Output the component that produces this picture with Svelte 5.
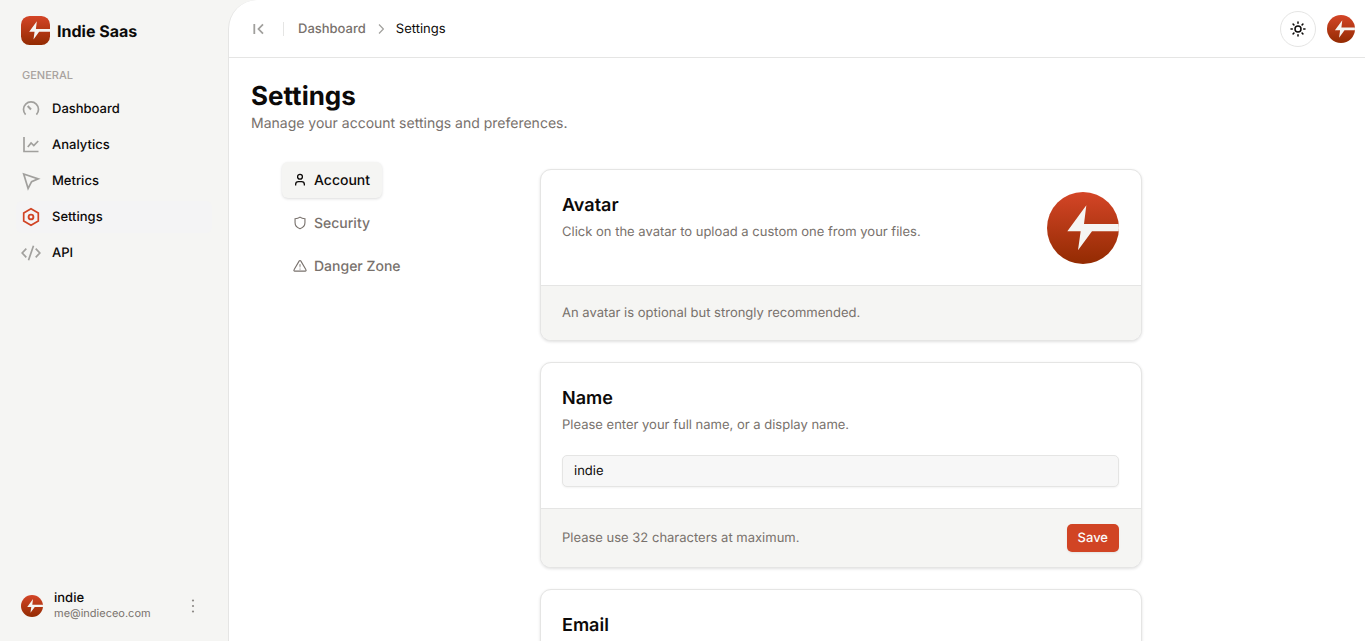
<script>
  let name = $state('indie');
  let email = $state('me@indieceo.com');

  const links = ['Dashboard', 'Analytics', 'Metrics', 'Settings', 'API'];
  const tabs = ['Account', 'Security', 'Danger Zone'];
</script>

{#snippet logo(id, square)}
  <svg class="logo" viewBox="0 0 216 216" aria-hidden="true">
    <defs>
      <linearGradient {id} x1="0" y1="0" x2="0" y2="1">
        <stop offset="0" stop-color="#d44527" />
        <stop offset="1" stop-color="#932b02" />
      </linearGradient>
      <clipPath id="{id}-clip"><rect width="216" height="216" rx={square ? 64 : 108} /></clipPath>
    </defs>
    <g clip-path="url(#{id}-clip)">
      <rect width="216" height="216" fill="url(#{id})" />
      <path d="M118 40 L111 96 H216 V118 H135 L93 175 L101 118 H61 Z" fill="#f5f5f3" />
    </g>
  </svg>
{/snippet}

{#snippet navIcon(label)}
  <svg class="nav-icon" viewBox="0 0 20 20" fill="none" stroke="currentColor" stroke-width="1.7" aria-hidden="true">
    {#if label === 'Dashboard'}
      <path d="M4.600 15.600A7.500 7.500 0 1 1 15.400 15.600" />
      <path d="M6.700 7l3.300 3.500" stroke-width="2" />
    {:else if label === 'Analytics'}
      <path d="M3 2v14.500h14.500M6.800 12l3.300-4 2.700 2.500L17.200 6" />
    {:else if label === 'Metrics'}
      <path d="M2.700 3l14.500 4.900-6.600 2.800-3.500 6.800z" />
    {:else if label === 'Settings'}
      <path d="M10 1.800l7.300 4.100v8.200L10 18.200l-7.300-4.100V5.900z" />
      <circle cx="10" cy="10" r="2.400" stroke-width="1.900" />
    {:else}
      <path d="M5.300 5.700L1.200 10l4.100 4.300M14.700 5.700L18.800 10l-4.100 4.300M12.500 2.800L7.500 17.200" />
    {/if}
  </svg>
{/snippet}

{#snippet tabIcon(label)}
  <svg class="tab-icon" viewBox="0 0 15 15" fill="currentColor" aria-hidden="true">
    {#if label === 'Account'}
      <g fill="none" stroke="currentColor" stroke-width="1.400">
        <circle cx="7.500" cy="4" r="2.600" />
        <path d="M2.800 13.500v-1.200c0-1.900 1.400-3 3.100-3h3.200c1.700 0 3.100 1.100 3.100 3v1.200" />
      </g>
    {:else if label === 'Security'}
      <path d="M7.500 1.200C6.200 2.200 4 2.900 2.200 3v4.300c0 3.200 2.100 5.200 5.300 6.300 3.200-1.100 5.300-3.100 5.300-6.300V3c-1.800-.1-4-.8-5.300-1.800z" fill="none" stroke="currentColor" stroke-width="1.200" />
    {:else}
      <path d="M6.700 2a.95.950 0 0 1 1.600 0l5.600 9.600a.9.900 0 0 1-.8 1.400H1.900a.9.900 0 0 1-.8-1.400z" fill="none" stroke="currentColor" stroke-width="1.200" />
      <path d="M6.900 5.500h1.200L7.800 9h-.6z" />
      <circle cx="7.500" cy="10.700" r=".65" />
    {/if}
  </svg>
{/snippet}

<div class="shell">
  <aside class="sidebar">
    <a class="brand" href="#home">
      <span class="brand-mark">{@render logo('brand', true)}</span>
      Indie Saas
    </a>
    <p class="section">GENERAL</p>
    <nav class="nav" aria-label="Main">
      {#each links as label}
        <a href="#{label.toLowerCase()}" class:active={label === 'Settings'}>
          {@render navIcon(label)}{label}
        </a>
      {/each}
    </nav>
    <div class="user">
      <span class="user-avatar">{@render logo('user', false)}</span>
      <div class="user-text">
        <span class="user-name">indie</span>
        <span class="user-email">me@indieceo.com</span>
      </div>
      <button class="more" aria-label="Account menu">
        <svg viewBox="0 0 16 16" fill="currentColor" aria-hidden="true">
          <circle cx="8" cy="2.500" r="1.100" /><circle cx="8" cy="8" r="1.100" /><circle cx="8" cy="13.500" r="1.100" />
        </svg>
      </button>
    </div>
  </aside>

  <main class="main">
    <header class="topbar">
      <button class="collapse" aria-label="Collapse sidebar">
        <svg viewBox="0 0 16 16" fill="none" stroke="currentColor" stroke-width="1.800" aria-hidden="true">
          <path d="M4.300 3v10M13 3.300L8.500 8l4.500 4.700" />
        </svg>
      </button>
      <span class="rule"></span>
      <nav class="crumbs" aria-label="Breadcrumb">
        <a href="#dashboard">Dashboard</a>
        <svg viewBox="0 0 12 12" fill="none" stroke="currentColor" stroke-width="1.200" aria-hidden="true">
          <path d="M4 1.500L8.400 6 4 10.500" />
        </svg>
        <span aria-current="page">Settings</span>
      </nav>
      <button class="theme" aria-label="Toggle theme">
        <svg viewBox="0 0 18 18" fill="none" stroke="currentColor" stroke-width="1.500" stroke-linecap="round" aria-hidden="true">
          <circle cx="9" cy="9" r="3" />
          <path d="M9 2v1.300M9 14.700V16M2 9h1.300M14.700 9H16M4.100 4.100l.8.8M13.100 13.100l.8.8M4.100 13.900l.8-.8M13.100 4.900l.8-.8" />
        </svg>
      </button>
      <button class="profile" aria-label="Profile">{@render logo('profile', false)}</button>
    </header>

    <div class="page">
      <h1>Settings</h1>
      <p class="lead">Manage your account settings and preferences.</p>

      <div class="columns">
        <nav class="tabs" aria-label="Settings sections">
          {#each tabs as label}
            <a href="#{label.toLowerCase().replace(' ', '-')}" class:selected={label === 'Account'}>
              {@render tabIcon(label)}{label}
            </a>
          {/each}
        </nav>

        <div class="cards">
          <section class="card">
            <div class="body with-avatar">
              <div>
                <h2>Avatar</h2>
                <p>Click on the avatar to upload a custom one from your files.</p>
              </div>
              <button class="avatar" aria-label="Upload avatar">{@render logo('avatar', false)}</button>
            </div>
            <footer class="note"><p>An avatar is optional but strongly recommended.</p></footer>
          </section>

          <section class="card">
            <div class="body">
              <h2><label for="name">Name</label></h2>
              <p>Please enter your full name, or a display name.</p>
              <input id="name" type="text" maxlength="32" bind:value={name} />
            </div>
            <footer>
              <p>Please use 32 characters at maximum.</p>
              <button class="save">Save</button>
            </footer>
          </section>

          <section class="card">
            <div class="body">
              <h2><label for="email">Email</label></h2>
              <input id="email" type="email" bind:value={email} />
            </div>
          </section>
        </div>
      </div>
    </div>
  </main>
</div>

<style>
  :global(body) {
    margin: 0;
    background: #f5f5f3;
  }
  .shell, .shell * {
    box-sizing: border-box;
  }
  .shell {
    display: flex;
    height: 100vh;
    overflow: hidden;
    font: 400 13px/18px Inter, sans-serif;
    text-rendering: geometricPrecision;
    color: #0c0a09;
  }
  h1, h2, p {
    margin: 0;
  }
  a {
    color: inherit;
    text-decoration: none;
  }
  button {
    display: flex;
    align-items: center;
    justify-content: center;
    padding: 0;
    border: 0;
    background: none;
    color: inherit;
    font: inherit;
    text-rendering: inherit;
    cursor: pointer;
  }
  svg {
    display: block;
    flex: none;
  }
  .logo {
    width: 100%;
    height: 100%;
  }

  .sidebar {
    flex: 0 0 228px;
    display: flex;
    flex-direction: column;
    padding: 16px 16px 20px;
  }
  .brand {
    display: flex;
    align-items: center;
    gap: 7px;
    padding-left: 5px;
    font-size: 16px;
    font-weight: 700;
  }
  .brand-mark {
    width: 29px;
    height: 29px;
  }
  .section {
    margin: 22px 0 9px;
    padding-left: 6px;
    font-size: 11px;
    line-height: 17px;
    color: #a8a29e;
    font-weight: 500;
  }
  .nav {
    display: flex;
    flex-direction: column;
    gap: 4px;
  }
  .nav a {
    display: flex;
    align-items: center;
    gap: 11px;
    height: 32px;
    padding-left: 5px;
    border-radius: 6px;
    font-weight: 500;
  }
  .nav a.active {
    background: #f4f4f5;
  }
  .nav-icon {
    width: 20px;
    height: 20px;
    color: #a1a09d;
  }
  .active .nav-icon {
    color: #d14424;
  }
  .user {
    display: flex;
    align-items: center;
    gap: 11px;
    margin-top: auto;
    padding: 0 11px 0 5px;
  }
  .user-avatar {
    width: 22px;
    height: 22px;
  }
  .user-text {
    flex: 1;
    display: flex;
    flex-direction: column;
    line-height: 15px;
  }
  .user-name {
    font-weight: 500;
  }
  .user-email {
    font-size: 11px;
    color: #78716c;
  }
  .more {
    color: #8d8a86;
  }
  .more svg {
    width: 16px;
    height: 16px;
  }

  .main {
    flex: 1;
    min-width: 0;
    overflow: hidden;
    border-left: 1px solid #e5e5e4;
    border-top-left-radius: 29px;
    background: #fff;
  }
  .topbar {
    display: flex;
    align-items: center;
    height: 58px;
    padding: 0 10px 0 21px;
    border-bottom: 1px solid #e5e5e4;
  }
  .collapse {
    color: #a1a09d;
  }
  .collapse svg {
    width: 16px;
    height: 16px;
  }
  .rule {
    width: 1px;
    height: 14px;
    margin: 0 14px 0 17px;
    background: #e5e5e4;
  }
  .crumbs {
    flex: 1;
    display: flex;
    align-items: center;
    gap: 9px;
  }
  .crumbs a {
    color: #78716c;
    font-weight: 500;
  }
  .crumbs svg {
    width: 12px;
    height: 12px;
    color: #a1a09d;
  }
  .theme {
    width: 36px;
    height: 36px;
    margin-right: 11px;
    border: 1px solid #e5e5e4;
    border-radius: 50%;
  }
  .theme svg {
    width: 18px;
    height: 18px;
  }
  .profile {
    width: 28px;
    height: 28px;
  }

  .page {
    padding: 23px 22px;
  }
  h1 {
    font-size: 26px;
    line-height: 32px;
    font-weight: 700;
  }
  .lead {
    font-size: 14px;
    line-height: 22px;
    color: #78716c;
  }
  .columns {
    display: flex;
    padding: 27px 30px 0 31px;
  }
  .tabs {
    flex: 0 0 258px;
    display: flex;
    flex-direction: column;
    align-items: flex-start;
    gap: 7px;
  }
  .tabs a {
    display: flex;
    align-items: center;
    gap: 7px;
    height: 36px;
    padding: 0 12px 0 11px;
    border-radius: 6px;
    font-size: 14px;
    line-height: 21px;
    font-weight: 500;
    color: #78716c;
  }
  .tabs a.selected {
    background: #f5f5f3;
    color: #0c0a09;
    box-shadow: 0 1px 3px rgb(0 0 0 / 0.14);
  }
  .tab-icon {
    width: 14px;
    height: 14px;
  }
  .cards {
    flex: 1;
    min-width: 0;
    max-width: 602px;
    display: flex;
    flex-direction: column;
    gap: 21px;
    padding-top: 7px;
  }
  .card {
    border: 1px solid #e5e5e4;
    border-radius: 11px;
    background: #fff;
    box-shadow: 0 1px 3px rgb(0 0 0 / 0.12);
    color: #78716c;
  }
  .body {
    padding: 22px 22px 21px 21px;
  }
  .with-avatar {
    display: flex;
    justify-content: space-between;
  }
  h2 {
    margin-bottom: 4px;
    font-size: 18px;
    line-height: 27px;
    font-weight: 600;
    color: #0c0a09;
  }
  .avatar {
    width: 72px;
    height: 72px;
  }
  input {
    display: block;
    width: 100%;
    height: 32px;
    margin-top: 21px;
    padding: 0 11px;
    border: 1px solid #e5e5e4;
    border-radius: 5px;
    background: #f7f7f7;
    box-shadow: 0 1px 2px rgb(0 0 0 / 0.05);
    color: #0c0a09;
    font: inherit;
    text-rendering: inherit;
  }
  footer {
    display: flex;
    align-items: center;
    justify-content: space-between;
    min-height: 59px;
    padding: 0 22px 0 21px;
    border-top: 1px solid #e5e5e4;
    border-radius: 0 0 10px 10px;
    background: #f5f5f3;
  }
  footer.note {
    min-height: 55px;
  }
  .save {
    height: 28px;
    padding: 0 11px;
    border-radius: 5px;
    background: #d14424;
    box-shadow: 0 1px 2px rgb(0 0 0 / 0.08);
    color: #fafaf9;
    font-weight: 500;
  }
</style>
